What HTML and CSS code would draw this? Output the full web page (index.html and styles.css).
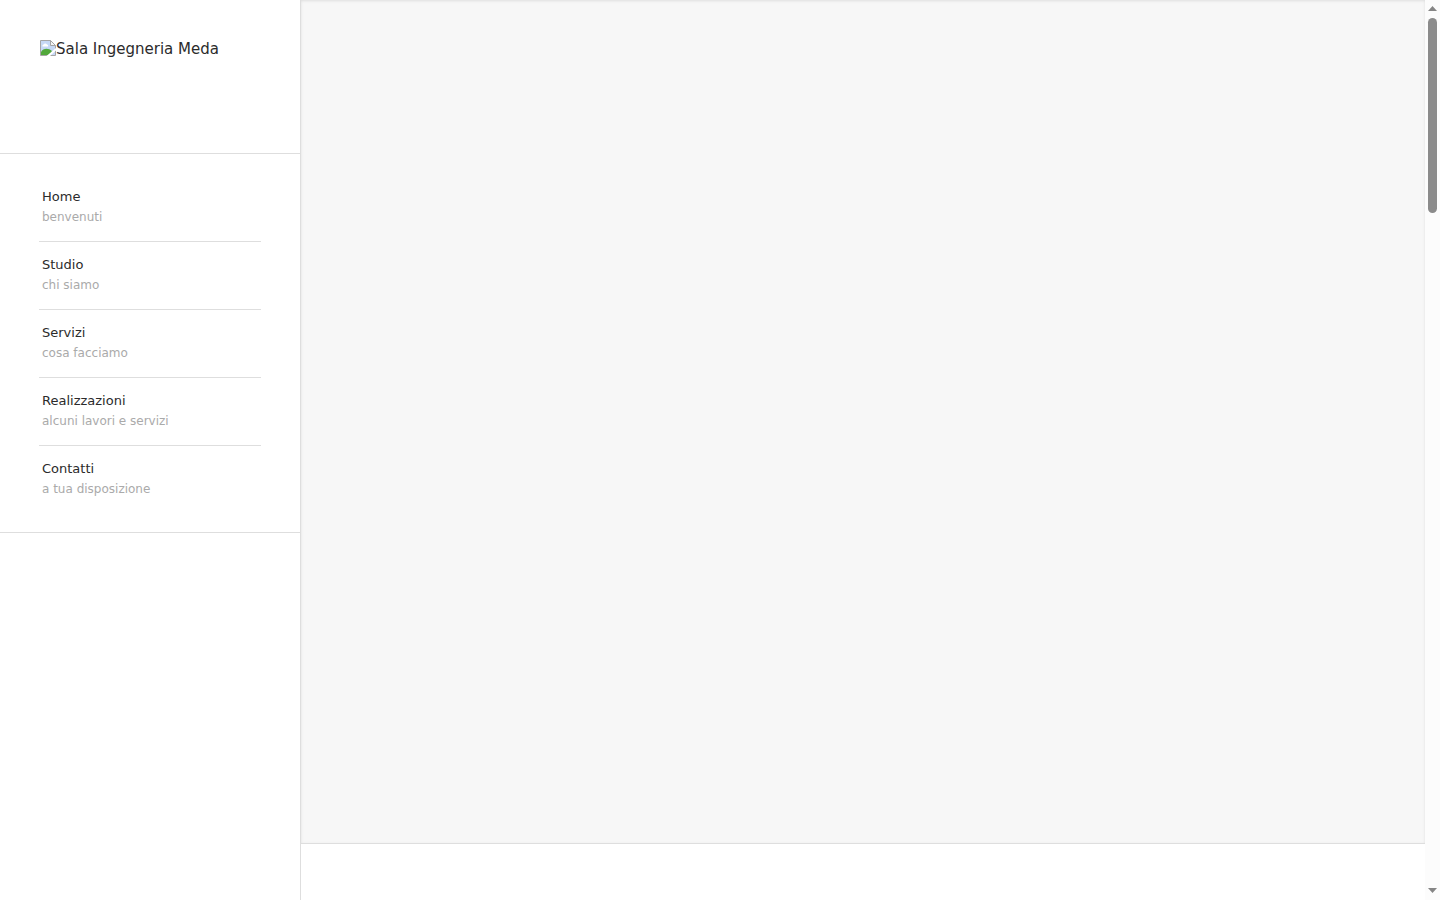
FILE: index.html
```html
<!DOCTYPE html>
<html lang="it">
<head>
    <meta charset="UTF-8">
    <meta name="viewport" content="width=device-width, initial-scale=1.0">
    <title>Sala Ingegneria Meda</title>
    <link rel="stylesheet" href="styles.css">
</head>
<body>
    <header class="sidebar">
        <a class="logo" href="#home">
            <svg width="16" height="16" viewBox="0 0 16 16" aria-hidden="true">
                <path d="M0.5 0.5H10.5L15.5 5.5V15.5H0.5Z" fill="#c6d8f5"/>
                <path d="M2.5 6.5a1.5 1.5 0 0 1 1-2 2 2 0 0 1 3.5 0 1.3 1.3 0 0 1 1 2Z" fill="#fff"/>
                <path d="M1 15V12C3 8.5 8 7.5 12 11L10 15Z" fill="#52a83b"/>
                <path d="M0.5 15.5V0.5H10.5L15.5 5.5V15.5Z" fill="none" stroke="#a5a5a5"/>
                <path d="M10.5 0.5V5.5H15.5Z" fill="#f4f4f4" stroke="#a5a5a5"/>
                <path d="M6.5 16L16 8V10.5L10 16Z" fill="#fff"/>
            </svg>
            <span>Sala Ingegneria Meda</span>
        </a>
        <nav>
            <ul class="menu">
                <li><a href="#home">Home<span>benvenuti</span></a></li>
                <li><a href="#studio">Studio<span>chi siamo</span></a></li>
                <li><a href="#servizi">Servizi<span>cosa facciamo</span></a></li>
                <li><a href="#realizzazioni">Realizzazioni<span>alcuni lavori e servizi</span></a></li>
                <li><a href="#contatti">Contatti<span>a tua disposizione</span></a></li>
            </ul>
        </nav>
    </header>
    <main>
        <section id="home" class="slider"></section>
    </main>
    <div class="scrollbar" aria-hidden="true">
        <svg width="15" height="18" viewBox="0 0 15 18"><path d="M3 11L7.5 6L12 11Z" fill="#858585"/></svg>
        <div class="track"><div class="thumb"></div></div>
        <svg width="15" height="18" viewBox="0 0 15 18"><path d="M3 6L7.5 11L12 6Z" fill="#858585"/></svg>
    </div>
</body>
</html>
```

FILE: styles.css
```css
* {
    box-sizing: border-box;
}

body {
    display: flex;
    min-height: 100vh;
    margin: 0;
    background-color: #fff;
    color: #2b2b2b;
    font-family: "DejaVu Sans", sans-serif;
    font-size: 15px;
}

a {
    color: inherit;
    text-decoration: none;
}

/* sidebar */
.sidebar {
    flex: none;
    width: 301px;
    border-right: 1px solid #dedede;
}

.logo {
    display: flex;
    height: 154px;
    padding: 40px 40px 0;
    border-bottom: 1px solid #dedede;
    line-height: 18px;
}

.logo svg {
    flex: none;
}

.menu {
    list-style: none;
    margin: 0;
    padding: 20px 39px 19px;
    border-bottom: 1px solid #dedede;
}

.menu li {
    border-bottom: 1px solid #dedede;
}

.menu li:last-child {
    border-bottom: none;
}

.menu a {
    display: block;
    padding: 13px 3px 14px;
    font-size: 13px;
    line-height: 20px;
}

.menu span {
    display: block;
    color: #aaa;
    font-size: 12px;
}

/* content */
main {
    flex: 1;
}

.slider {
    height: calc(100vh - 56px);
    background-color: #f7f7f7;
    border-bottom: 1px solid #dedede;
    box-shadow: inset 0 1px 3px rgba(0, 0, 0, 0.1);
}

/* scrollbar */
.scrollbar {
    display: flex;
    flex: none;
    flex-direction: column;
    width: 15px;
    background-color: #fcfcfc;
}

.track {
    flex: 1;
}

.thumb {
    width: 9px;
    height: 195px;
    margin: 0 auto;
    border-radius: 5px;
    background-color: #8b8b8b;
}
```
